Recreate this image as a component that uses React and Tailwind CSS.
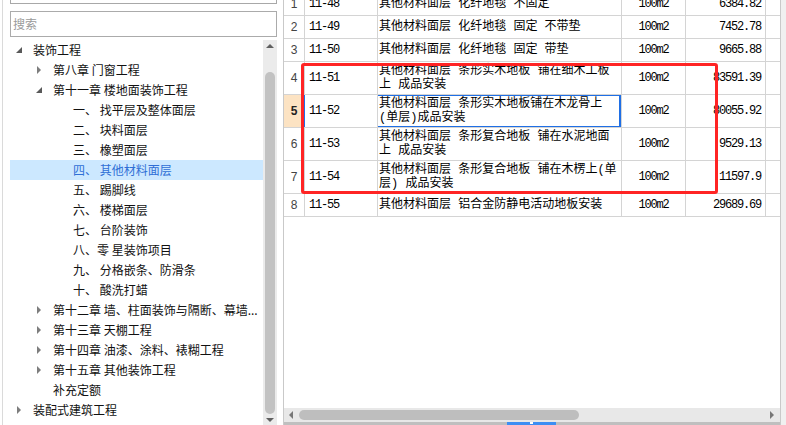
import React from 'react';

const tree = [
  { lv: 0, t: '装饰工程', ic: 'open' },
  { lv: 1, t: '第八章 门窗工程', ic: 'closed' },
  { lv: 1, t: '第十一章 楼地面装饰工程', ic: 'open' },
  { lv: 2, t: '一、 找平层及整体面层' },
  { lv: 2, t: '二、 块料面层' },
  { lv: 2, t: '三、 橡塑面层' },
  { lv: 2, t: '四、 其他材料面层', sel: true },
  { lv: 2, t: '五、 踢脚线' },
  { lv: 2, t: '六、 楼梯面层' },
  { lv: 2, t: '七、 台阶装饰' },
  { lv: 2, t: '八、零 星装饰项目' },
  { lv: 2, t: '九、 分格嵌条、防滑条' },
  { lv: 2, t: '十、 酸洗打蜡' },
  { lv: 1, t: '第十二章 墙、柱面装饰与隔断、幕墙...', ic: 'closed' },
  { lv: 1, t: '第十三章 天棚工程', ic: 'closed' },
  { lv: 1, t: '第十四章 油漆、涂料、裱糊工程', ic: 'closed' },
  { lv: 1, t: '第十五章 其他装饰工程', ic: 'closed' },
  { lv: 1, t: '补充定额' },
  { lv: 0, t: '装配式建筑工程', ic: 'closed' },
];

const rows = [
  { n: 1, code: '11-48', name: ['其他材料面层 化纤地毯 不固定'], price: '6384.82' },
  { n: 2, code: '11-49', name: ['其他材料面层 化纤地毯 固定 不带垫'], price: '7452.78' },
  { n: 3, code: '11-50', name: ['其他材料面层 化纤地毯 固定 带垫'], price: '9665.88' },
  { n: 4, code: '11-51', name: ['其他材料面层 条形实木地板 铺在细木工板', '上 成品安装'], price: '83591.39' },
  { n: 5, code: '11-52', name: ['其他材料面层 条形实木地板铺在木龙骨上', '(单层)成品安装'], price: '80055.92', sel: true },
  { n: 6, code: '11-53', name: ['其他材料面层 条形复合地板 铺在水泥地面', '上 成品安装'], price: '9529.13' },
  { n: 7, code: '11-54', name: ['其他材料面层 条形复合地板 铺在木楞上(单', '层) 成品安装'], price: '11597.9' },
  { n: 8, code: '11-55', name: ['其他材料面层 铝合金防静电活动地板安装'], price: '29689.69' },
];

const pads = ['pl-[5px]', 'pl-[25px]', 'pl-[63px]'];

function Caret({ ic }) {
  if (ic === 'open')
    return (
      <svg width="7" height="7" className="ml-[1px] mt-[1px]">
        <polygon points="6,0 6,6 0,6" fill="#595959" />
      </svg>
    );
  if (ic === 'closed')
    return (
      <svg width="5" height="8" className="ml-[2px]">
        <polygon points="0,0 4,4 0,8" fill="#7d7d7d" />
      </svg>
    );
  return null;
}

const mono = "font-['Liberation_Mono','Noto_Sans_CJK_SC',monospace]";

export default function App() {
  return (
    <div className="relative w-[786px] h-[425px] flex bg-white overflow-hidden">
      {/* left: tree */}
      <div className="w-[283px] shrink-0 pl-[2px] flex">
        <div className="flex-1 border-l border-[#dadada] pl-[7px] pr-[6px] flex flex-col">
          <div className="h-[4px] border-x border-b border-[#a8a8a8]" />
          <div className="mt-[7px] h-[26px] border border-[#ababab] flex items-center pl-[2px] text-[12px] text-[#9a9a9a] font-['Noto_Sans_CJK_SC',sans-serif]">
            搜索
          </div>
          <div className="mt-[3px] flex-1 flex min-h-0">
            <div className="flex-1 font-['Noto_Sans_CJK_SC',sans-serif] text-[12px] text-[#111]">
              {tree.map((it, i) => (
                <div
                  key={i}
                  className={`h-[20px] flex items-center whitespace-nowrap overflow-hidden ${pads[it.lv]} ${
                    it.sel ? 'bg-[#cce8ff] text-[#2f6fd6]' : ''
                  }`}
                >
                  {it.lv < 2 && (
                    <span className="w-[18px] shrink-0 flex items-center">
                      <Caret ic={it.ic} />
                    </span>
                  )}
                  <span>{it.t}</span>
                </div>
              ))}
            </div>
            <div className="w-[14px] bg-[#ebebeb] flex flex-col items-center">
              <svg width="8" height="5" className="mt-[4px]">
                <polygon points="0,4 4,0 8,4" fill="#606060" />
              </svg>
              <div className="mt-[23px] w-[10px] flex-1 rounded-full bg-[#c2c2c2]" />
              <svg width="8" height="5" className="mt-[4px] mb-[2px]">
                <polygon points="0,0 8,0 4,4" fill="#606060" />
              </svg>
            </div>
          </div>
        </div>
      </div>

      {/* right: grid */}
      <div className="flex-1 flex">
        <div className="flex-1 border-x border-[#c9c9c9] flex flex-col">
          <div className="flex-1 overflow-hidden">
            <div className="-mt-[7px]">
              {rows.map((r) => {
                const tall = r.name.length > 1;
                return (
                  <div
                    key={r.n}
                    className={`flex border-b border-[#d4d4d4] ${tall ? 'h-[33px]' : 'h-[23px]'}`}
                  >
                    <div
                      className={`w-[21px] shrink-0 border-r flex items-center justify-center text-[12px] font-['Liberation_Sans',sans-serif] ${
                        r.sel
                          ? 'bg-[#fce3c3] border-[#1f6fe5] font-bold text-[#222]'
                          : 'border-[#d4d4d4] text-[#444]'
                      }`}
                    >
                      {r.n}
                    </div>
                    <div className={`w-[73px] shrink-0 border-r border-[#d4d4d4] flex items-center pl-[4px] text-[12px] tracking-[-1.2px] text-black ${mono}`}>
                      {r.code}
                    </div>
                    <div className={`relative w-[244px] shrink-0 border-r border-[#d4d4d4] flex flex-col justify-center pl-[1px] text-[12px] leading-[14px] text-black whitespace-nowrap overflow-hidden ${mono}`}>
                      {r.name.map((l, j) => (
                        <div key={j}>{l}</div>
                      ))}
                      {r.sel && <div className="absolute -left-[2px] -top-[1px] -bottom-[1px] right-[0px] border-2 border-[#1f6fe5]" />}
                    </div>
                    <div className={`w-[64px] shrink-0 border-r border-[#d4d4d4] flex items-center justify-center text-[12px] tracking-[-1.2px] text-black ${mono}`}>
                      100m2
                    </div>
                    <div className={`w-[80px] shrink-0 border-r border-[#d4d4d4] flex items-center justify-end pr-[4px] text-[12px] tracking-[-1.2px] text-black ${mono}`}>
                      {r.price}
                    </div>
                    <div className="flex-1" />
                  </div>
                );
              })}
            </div>
          </div>
          {/* horizontal scrollbar */}
          <div className="h-[14px] bg-[#e8e8e8] flex items-center px-[5px]">
            <svg width="5" height="8">
              <polygon points="4,0 0,4 4,8" fill="#777" />
            </svg>
            <div className="ml-[5px] w-[280px] h-[10px] rounded-full bg-[#bebebe]" />
            <div className="flex-1" />
            <svg width="5" height="8">
              <polygon points="0,0 4,4 0,8" fill="#777" />
            </svg>
          </div>
          <div className="h-[3px] bg-[#bfbfbf] flex">
            <div className="ml-[223px] w-[49px] bg-[#3d8ef3] flex justify-center">
              <div className="w-[3px] h-[2px] bg-white" />
            </div>
          </div>
        </div>
        <div className="w-[5px] bg-[#f0f0f0]" />
      </div>

      {/* red highlight box */}
      <div className="absolute left-[301px] top-[63px] w-[417px] h-[131px] border-[3px] border-[#ff2424] rounded-[3px] pointer-events-none" />
    </div>
  );
}
